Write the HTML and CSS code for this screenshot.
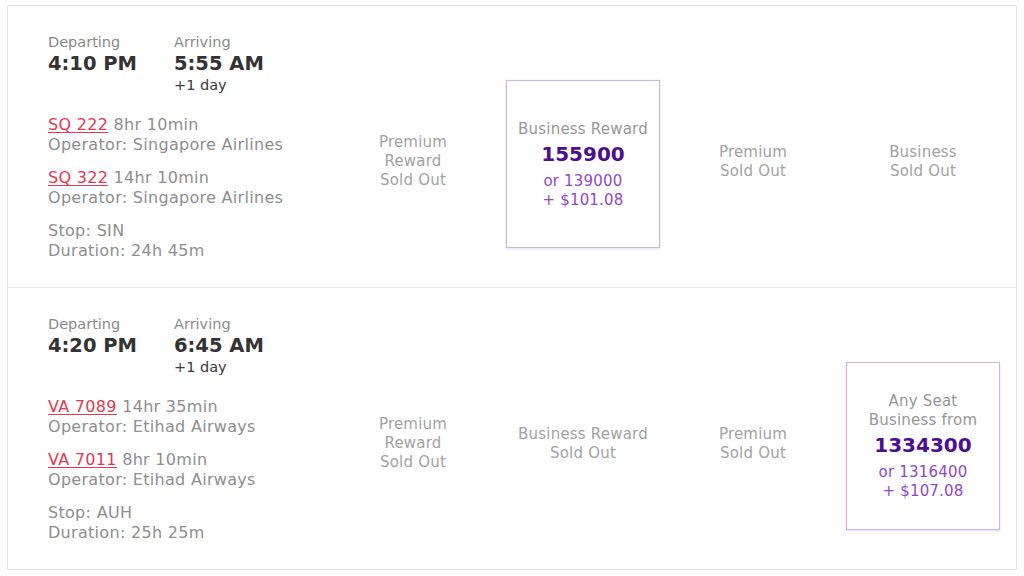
FILE: index.html
```html
<!DOCTYPE html>
<html>
<head>
    <meta charset="UTF-8">
    <meta name="viewport" content="width=device-width, initial-scale=1.0">
    <title>Flight results</title>
    <link rel="stylesheet" href="styles.css">
</head>
<body>
    <div class="results">
        <!-- flight 1 -->
        <div class="flight">
            <div class="flight-info">
                <div class="times">
                    <div class="time-block">
                        <div class="time-label">Departing</div>
                        <div class="time">4:10 PM</div>
                    </div>
                    <div class="time-block">
                        <div class="time-label">Arriving</div>
                        <div class="time">5:55 AM</div>
                        <div class="next-day">+1 day</div>
                    </div>
                </div>
                <div class="segment">
                    <div><a class="flight-code" href="#">SQ 222</a> 8hr 10min</div>
                    <div>Operator: Singapore Airlines</div>
                </div>
                <div class="segment">
                    <div><a class="flight-code" href="#">SQ 322</a> 14hr 10min</div>
                    <div>Operator: Singapore Airlines</div>
                </div>
                <div class="segment">
                    <div>Stop: SIN</div>
                    <div>Duration: 24h 45m</div>
                </div>
            </div>
            <div class="fares">
                <div class="fare sold-out">Premium<br>Reward<br>Sold Out</div>
                <div class="fare fare-box">
                    <div class="fare-label">Business Reward</div>
                    <div class="fare-points">155900</div>
                    <div class="fare-alt">or 139000<br>+ $101.08</div>
                </div>
                <div class="fare sold-out">Premium<br>Sold Out</div>
                <div class="fare sold-out">Business<br>Sold Out</div>
            </div>
        </div>

        <!-- flight 2 -->
        <div class="flight">
            <div class="flight-info">
                <div class="times">
                    <div class="time-block">
                        <div class="time-label">Departing</div>
                        <div class="time">4:20 PM</div>
                    </div>
                    <div class="time-block">
                        <div class="time-label">Arriving</div>
                        <div class="time">6:45 AM</div>
                        <div class="next-day">+1 day</div>
                    </div>
                </div>
                <div class="segment">
                    <div><a class="flight-code" href="#">VA 7089</a> 14hr 35min</div>
                    <div>Operator: Etihad Airways</div>
                </div>
                <div class="segment">
                    <div><a class="flight-code" href="#">VA 7011</a> 8hr 10min</div>
                    <div>Operator: Etihad Airways</div>
                </div>
                <div class="segment">
                    <div>Stop: AUH</div>
                    <div>Duration: 25h 25m</div>
                </div>
            </div>
            <div class="fares">
                <div class="fare sold-out">Premium<br>Reward<br>Sold Out</div>
                <div class="fare sold-out">Business Reward<br>Sold Out</div>
                <div class="fare sold-out">Premium<br>Sold Out</div>
                <div class="fare fare-box">
                    <div class="fare-label">Any Seat<br>Business from</div>
                    <div class="fare-points">1334300</div>
                    <div class="fare-alt">or 1316400<br>+ $107.08</div>
                </div>
            </div>
        </div>
    </div>
</body>
</html>
```

FILE: styles.css
```css
* {
    margin: 0;
    padding: 0;
    box-sizing: border-box;
}

body {
    font-family: "DejaVu Sans", "Noto Sans", sans-serif;
    background: #fff;
    color: #333;
    width: 1024px;
    height: 576px;
    overflow: hidden;
}

.results {
    margin: 5px 7px 0 7px;
    border: 1px solid #e6e6e6;
    border-bottom: none;
}

/* one flight row */
.flight {
    display: flex;
    border-bottom: 1px solid #e6e6e6;
}

.flight-info {
    width: 320px;
    flex-shrink: 0;
    padding: 27px 0 26px 40px;
    font-size: 16px;
    letter-spacing: 0.3px;
    line-height: 20px;
    color: #8e8e8e;
}

.times {
    display: flex;
    gap: 37px;
    margin-bottom: 22px;
    letter-spacing: 0;
}

.time-label {
    font-size: 14.5px;
    line-height: 18px;
    color: #8a8a8a;
}

.time {
    font-size: 19.5px;
    line-height: 26px;
    font-weight: bold;
    color: #333;
}

.next-day {
    font-size: 14.5px;
    line-height: 16px;
    color: #3a3a3a;
}

.segment + .segment {
    margin-top: 13px;
}

.flight-code {
    color: #e8364e;
    text-decoration: underline;
    text-underline-offset: 2px;
}

/* fare columns */
.fares {
    display: grid;
    grid-template-columns: repeat(4, 170px);
    align-items: center;
    justify-items: center;
    padding-top: 30px;
}

.fare {
    text-align: center;
    font-size: 15px;
    letter-spacing: 0.2px;
    line-height: 19px;
}

.sold-out {
    color: #a2a2a2;
}

.fare-box {
    width: 154px;
    height: 168px;
    margin-top: 4px;
    padding-top: 2px;
    border: 1px solid #c9b3e9;
    box-shadow: 0 1px 3px rgba(0, 0, 0, 0.12);
    display: flex;
    flex-direction: column;
    justify-content: center;
}

.fare-label {
    color: #979797;
}

.fare-points {
    font-size: 20px;
    line-height: 30px;
    font-weight: bold;
    letter-spacing: 0;
    color: #4b0f8e;
}

.fare-alt {
    margin-top: 3px;
    color: #9248c9;
}
```
